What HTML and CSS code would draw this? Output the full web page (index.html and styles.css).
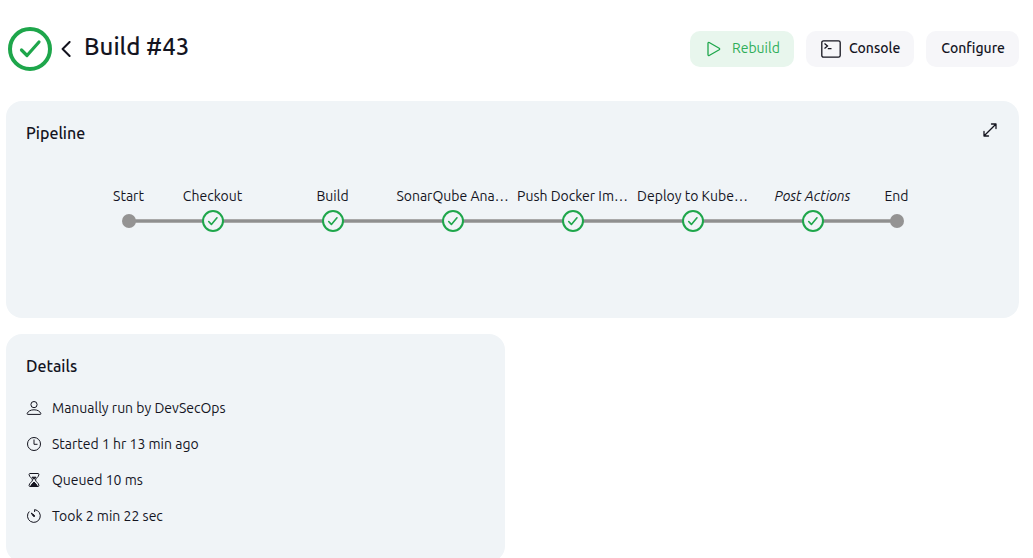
FILE: index.html
```html
<!DOCTYPE html>
<html lang="en">
<head>
<meta charset="utf-8">
<title>Build #43</title>
<link rel="stylesheet" href="styles.css">
</head>
<body>
<svg width="0" height="0" class="defs" aria-hidden="true">
  <symbol id="ok" viewBox="0 0 22 22">
    <circle cx="11" cy="11" r="10" fill="#f0f4f7" stroke="#1ea64b" stroke-width="2"/>
    <path d="M6.700 11.500l2.700 2.900 5.600-6.600" fill="none" stroke="#1ea64b" stroke-width="1.600" stroke-linecap="round" stroke-linejoin="round"/>
  </symbol>
</svg>
<main class="page">
  <header class="header">
    <svg class="status" viewBox="0 0 44 44" role="img" aria-label="Success">
      <circle cx="22" cy="22" r="20" fill="none" stroke="#1ea64b" stroke-width="4"/>
      <path d="M13.500 23l5.500 5.500L31 15" fill="none" stroke="#1ea64b" stroke-width="3.200" stroke-linecap="round" stroke-linejoin="round"/>
    </svg>
    <a class="back" href="#" aria-label="Previous build">
      <svg viewBox="0 0 10 16"><path d="M8.600 1L1.600 8l7 7" fill="none" stroke="#14141f" stroke-width="2" stroke-linecap="round" stroke-linejoin="round"/></svg>
    </a>
    <h1 class="title">Build #43</h1>
    <div class="actions">
      <button class="button button-green" type="button">
        <svg class="play" viewBox="0 0 14 16"><path d="M1 2.200v11.600c0 .7.6 1 1.200.7l10-5.800c.6-.4.6-1 0-1.400l-10-5.800C1.600 1.200 1 1.500 1 2.200z" fill="none" stroke="#1ea64b" stroke-width="1.300"/></svg>
        <span>Rebuild</span>
      </button>
      <button class="button" type="button">
        <svg class="console" viewBox="0 0 20 18"><rect x=".8" y=".8" width="18.400" height="16.400" rx="1.800" fill="none" stroke="#14141f" stroke-width="1.300"/><path d="M3.500 3.500l3 2.500-3 2.500M6.800 8.600h3.700" fill="none" stroke="#14141f" stroke-width="1.300"/></svg>
        <span>Console</span>
      </button>
      <button class="button" type="button"><span>Configure</span></button>
    </div>
  </header>

  <section class="card pipeline">
    <div class="card-head">
      <h2 class="card-title">Pipeline</h2>
      <a class="expand" href="#" aria-label="Expand pipeline">
        <svg viewBox="0 0 14 14" fill="none" stroke="#14141f" stroke-width="1.300" stroke-linecap="round" stroke-linejoin="round"><path d="M1.200 12.800L12.800 1.200M8.500 1h4.500v4.500M1 8.500V13h4.500"/></svg>
      </a>
    </div>
    <ol class="stages">
      <li class="stage stage-end"><span>Start</span><i class="dot"></i></li>
      <li class="stage"><span>Checkout</span><svg class="node"><use href="#ok"/></svg></li>
      <li class="stage"><span>Build</span><svg class="node"><use href="#ok"/></svg></li>
      <li class="stage"><span>SonarQube Ana…</span><svg class="node"><use href="#ok"/></svg></li>
      <li class="stage"><span>Push Docker Im…</span><svg class="node"><use href="#ok"/></svg></li>
      <li class="stage"><span>Deploy to Kube…</span><svg class="node"><use href="#ok"/></svg></li>
      <li class="stage"><em>Post Actions</em><svg class="node"><use href="#ok"/></svg></li>
      <li class="stage stage-end"><span>End</span><i class="dot"></i></li>
    </ol>
  </section>

  <div class="columns">
    <section class="card">
      <h2 class="card-title">Details</h2>
      <ul class="details">
        <li><svg viewBox="0 0 16 16"><circle cx="8" cy="4.600" r="3.100"/><path d="M1.700 14.400c-.6 0-.7-.5-.5-1 1-2.300 3.400-3.600 6.800-3.600s5.800 1.300 6.800 3.600c.2.500.1 1-.5 1z"/></svg>Manually run by DevSecOps</li>
        <li><svg viewBox="0 0 16 16"><circle cx="8" cy="8" r="6.500"/><path d="M8 3.500V8.300h3.500"/></svg>Started 1 hr 13 min ago</li>
        <li><svg viewBox="0 0 16 16"><path d="M4 1.500h8c.8 0 1 .6.900 1.200C12.600 5.300 9.500 6.200 9.500 8s3.100 2.700 3.400 5.300c.1.600-.1 1.200-.9 1.200H4c-.8 0-1-.6-.9-1.200C3.400 10.700 6.500 9.800 6.500 8S3.400 5.300 3.100 2.700C3 2.100 3.200 1.500 4 1.500z"/><path class="solid" d="M6 5.200h4L8 7.300zM8 10l3.200 3.500H4.800z"/></svg>Queued 10 ms</li>
        <li><svg viewBox="0 0 16 16"><path d="M3.300 3.500A6.400 6.400 0 1 0 8.600 1.600V4"/><path class="solid" d="M5.200 5l3.200 2.300c.8 1-.2 1.800-1 1z"/></svg>Took 2 min 22 sec</li>
      </ul>
    </section>
  </div>
</main>
</body>
</html>
```
FILE: styles.css
```css
* { box-sizing: border-box; }
html { overflow: hidden; }
body {
  margin: 0;
  background: #fff;
  color: #14141f;
  font-family: Ubuntu, "Noto Sans", sans-serif;
  font-size: 14px;
  line-height: 20px;
}
h1, h2, ol, ul { margin: 0; padding: 0; }
ol, ul { list-style: none; }
svg { display: block; flex: none; }
.defs { position: absolute; }
.page { padding: 27px 14px 0 6px; }
.header { display: flex; align-items: center; height: 44px; margin-bottom: 30px; padding-left: 2px; }
.status { width: 44px; height: 44px; }
.back { margin-left: 9px; }
.back svg { width: 10px; height: 16px; }
.title { margin: 0 0 4px 13px; font-size: 24px; line-height: 32px; font-weight: 550; }
.actions { display: flex; gap: 12px; margin-left: auto; }
.button {
  display: flex;
  align-items: center;
  height: 36px;
  padding: 0 14px 0 15px;
  border: 0;
  border-radius: 10px;
  background: #f6f6f9;
  color: inherit;
  font: inherit;
  font-weight: 500;
}
.button span { padding-bottom: 2px; }
.button-green { padding-left: 17px; background: #e8f6ed; color: #2fae59; font-weight: 400; }
.play { width: 14px; height: 16px; margin-right: 11px; }
.console { width: 20px; height: 18px; margin-right: 8px; }
.card { padding: 20px; border-radius: 16px; background: #f0f4f7; }
.card-head { display: flex; justify-content: space-between; }
.card-title { font-size: 16px; line-height: 24px; font-weight: 550; }
.expand { padding: 2px; }
.expand svg { width: 14px; height: 14px; }
.pipeline { padding-bottom: 86px; }
.stages { display: flex; justify-content: center; margin-top: 41px; }
.stage {
  display: flex;
  flex-direction: column;
  align-items: center;
  gap: 4px;
  width: 120px;
  white-space: nowrap;
  background: linear-gradient(#a9a9a9 1px, #8f8f8f 1px 3px, #a9a9a9 3px) 0 33px / 100% 4px no-repeat;
}
.stage-end { width: 48px; background-size: 50% 4px; }
.stage-end:first-child { background-position-x: 100%; }
.node { width: 22px; height: 22px; overflow: visible; }
.dot { width: 14px; height: 14px; margin-top: 4px; border-radius: 50%; background: #949393; }
.columns { display: grid; grid-template-columns: 1fr 1fr; gap: 16px; margin-top: 16px; }
.details { display: grid; gap: 16px; margin: 20px 0 16px; }
.details li { display: flex; align-items: center; gap: 10px; }
.details svg { width: 16px; height: 16px; fill: none; stroke: #14141f; stroke-width: 1; stroke-linejoin: round; }
.details .solid { fill: #14141f; }
```
